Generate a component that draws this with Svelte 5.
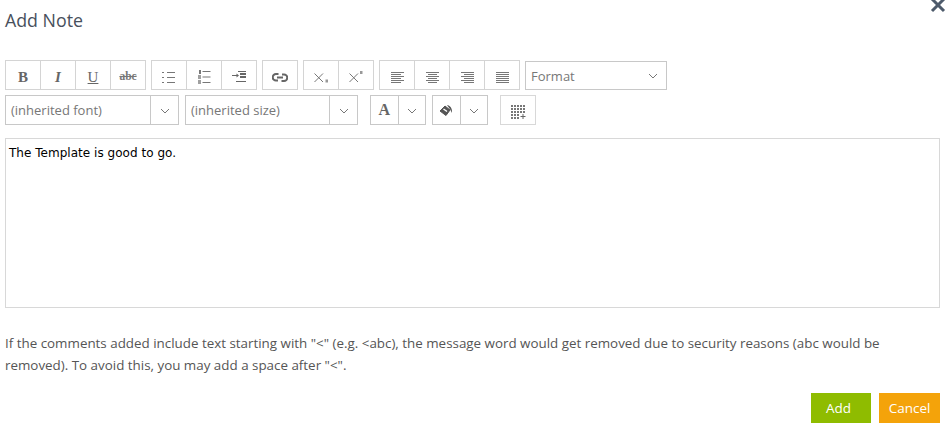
<script>
  const groups1 = [
    ['bold','italic','underline','strike'],
    ['ul','ol','indent'],
    ['link'],
    ['sub','sup'],
    ['left','center','right','justify']
  ];
  const aligns = {
    left: [[0,13],[0,10],[0,13],[0,10],[0,13],[0,10]],
    center: [[0,13],[2,9],[0,13],[2,9],[0,13],[2,9]],
    right: [[0,13],[3,10],[0,13],[3,10],[0,13],[3,10]],
    justify: [[0,13],[0,13],[0,13],[0,13],[0,13],[0,13]]
  };
  const gridDots = [];
  for (let y = 0; y < 5; y++) for (let x = 0; x < 5; x++) {
    if (!(y >= 3 && x > 2)) gridDots.push([x * 3, y * 3]);
  }
</script>

{#snippet chevron()}
  <svg class="chev" width="10" height="6" viewBox="0 0 10 6"><path d="M1 1 L5 5 L9 1" fill="none" stroke="#777" stroke-width="1"/></svg>
{/snippet}

{#snippet icon(name)}
  {#if name === 'bold'}
    <span class="glyph b">B</span>
  {:else if name === 'italic'}
    <span class="glyph i">I</span>
  {:else if name === 'underline'}
    <span class="glyph u">U</span>
  {:else if name === 'strike'}
    <span class="glyph s">abc</span>
  {:else if name === 'ul'}
    <svg width="14" height="11" viewBox="0 0 14 11"><g fill="#777"><rect x="0" y="0" width="2" height="1"/><rect x="0" y="5" width="2" height="1"/><rect x="0" y="10" width="2" height="1"/><rect x="5" y="0" width="8" height="1"/><rect x="5" y="5" width="8" height="1"/><rect x="5" y="10" width="8" height="1"/></g></svg>
  {:else if name === 'ol'}
    <svg width="13" height="14" viewBox="0 0 13 14"><g fill="#777"><rect x="1" y="0" width="2" height="4"/><rect x="0" y="5" width="3" height="4" opacity=".7"/><rect x="0" y="10" width="3" height="4" opacity=".7"/><rect x="4.500" y="1" width="8" height="1"/><rect x="4.500" y="6.500" width="8" height="1"/><rect x="4.500" y="12" width="8" height="1"/></g></svg>
  {:else if name === 'indent'}
    <svg width="14" height="12" viewBox="0 0 14 12"><g fill="#666"><rect x="6" y="0" width="8" height="1"/><rect x="8" y="2" width="6" height="2"/><rect x="8" y="5" width="6" height="2"/><rect x="4" y="10" width="10" height="1"/><path d="M0 4h4.500V2.500L7 4.500 4.500 6.500V5H0z"/></g></svg>
  {:else if name === 'link'}
    <svg width="16" height="9" viewBox="0 0 16 9"><g fill="none" stroke="#666" stroke-width="2"><path d="M6.500 1H4a3.300 3.300 0 0 0 0 6.600h2"/><path d="M9.500 8H12a3.300 3.300 0 0 0 0-6.600h-2"/><path d="M5 4.500h6"/></g></svg>
  {:else if name === 'sub'}
    <svg width="15" height="12" viewBox="0 0 15 12"><path d="M0.500 2.500 L9 11 M9 2.500 L0.500 11" stroke="#777" stroke-width="1" fill="none"/><rect x="11.500" y="8.500" width="2.500" height="3" fill="#999"/></svg>
  {:else if name === 'sup'}
    <svg width="15" height="12" viewBox="0 0 15 12"><path d="M0.500 2.500 L9 11 M9 2.500 L0.500 11" stroke="#777" stroke-width="1" fill="none"/><rect x="11" y="0" width="2.500" height="3" fill="#999"/></svg>
  {:else if aligns[name]}
    <svg width="13" height="11" viewBox="0 0 13 11">{#each aligns[name] as l, i}<rect x={l[0]} y={i * 2} width={l[1]} height="1" fill="#777"/>{/each}</svg>
  {/if}
{/snippet}

<div class="dialog">
  <header class="head">
    <h1>Add Note</h1>
    <svg class="close" width="16" height="15" viewBox="0 0 16 15"><path d="M2 0 L14 12 M14 0 L2 12" stroke="#4d5a6b" stroke-width="3" fill="none"/></svg>
  </header>

  <div class="toolbar">
    <div class="row one">
      {#each groups1 as g}
        <div class="group">
          {#each g as b}
            <button class="tb">{@render icon(b)}</button>
          {/each}
        </div>
      {/each}
      <div class="combo format"><span class="label">Format</span>{@render chevron()}</div>
    </div>
    <div class="row two">
      <div class="select font"><span class="label">(inherited font)</span><span class="arrow">{@render chevron()}</span></div>
      <div class="select size"><span class="label">(inherited size)</span><span class="arrow">{@render chevron()}</span></div>
      <div class="split color">
        <span class="main"><span class="glyph a">A</span></span><span class="arrow">{@render chevron()}</span>
      </div>
      <div class="split fill">
        <span class="main">
          <svg width="14" height="11" viewBox="0 0 14 11"><path d="M1 6 L6 1 L11 5 L7 10.500 Z" fill="#555" stroke="#555" stroke-linejoin="round"/><path d="M4.500 4 L8 6.500" stroke="#fff" stroke-width="1.500"/><path d="M8 0 C11 0.500 13.500 3 13 8 L11.500 5 Z" fill="#555"/></svg>
        </span><span class="arrow">{@render chevron()}</span>
      </div>
      <div class="table">
        <svg class="grid" width="15" height="14" viewBox="0 0 15 14">
          {#each gridDots as d}<rect x={d[0]} y={d[1]} width="2" height="2" fill="#777"/>{/each}
          <path d="M12 9v5M9.500 11.500h5" stroke="#666" stroke-width="1"/>
        </svg>
      </div>
    </div>
  </div>

  <div class="editor">The Template is good to go.</div>

  <p class="note">If the comments added include text starting with "&lt;" (e.g. &lt;abc), the message word would get removed due to security reasons (abc would be removed). To avoid this, you may add a space after "&lt;".</p>

  <footer class="actions">
    <button class="btn add">Add</button>
    <button class="btn cancel">Cancel</button>
  </footer>
</div>

<style>
  :global(body) { margin: 0; background: #fff; }
  .dialog {
    width: 951px; height: 430px; box-sizing: border-box; overflow: hidden;
    padding: 0 11px 0 5px;
    font-family: "Open Sans", "Noto Sans", sans-serif;
    color: #555;
  }
  .head { position: relative; height: 60px; }
  h1 {
    margin: 0; padding-top: 8px; font-weight: 400; font-size: 17.800px; line-height: 24px;
    color: #48505c;
  }
  .close { position: absolute; right: -6px; top: -1px; }
  .toolbar { display: flex; flex-direction: column; gap: 5px; }
  .row { display: flex; height: 30px; }
  .one { gap: 5px; }
  .group { display: flex; border: 1px solid #d4d4d4; box-sizing: border-box; height: 30px; }
  .tb {
    width: 35px; padding: 4px 0 0; border: 0; border-left: 1px solid #d4d4d4; background: #fff;
    display: flex; align-items: center; justify-content: center; box-sizing: border-box;
  }
  .tb:first-child { border-left: 0; width: 34px; }
  .glyph { font-family: "Liberation Serif", "DejaVu Serif", serif; color: #666; line-height: 1; }
  .b { font-weight: 700; font-size: 15px; }
  .i { font-style: italic; font-weight: 700; font-size: 15px; }
  .u { font-size: 15px; text-decoration: underline; }
  .s { font-size: 11.500px; font-weight: 700; color: #777; text-decoration: line-through; }
  .a { font-weight: 700; font-size: 16px; }
  .format {
    width: 142px; height: 29px; margin-top: 1px; box-sizing: border-box;
    border: 1px solid #c8c8c8; display: flex; align-items: center; justify-content: space-between;
    padding: 0 8px 0 5px;
  }
  .label { font-size: 13px; color: #777; white-space: nowrap; }
  .select, .split, .table {
    display: flex; box-sizing: border-box; height: 30px; border: 1px solid #c8c8c8; align-items: stretch;
  }
  .select .label { flex: 1; padding-left: 5px; line-height: 29px; }
  .arrow {
    width: 27px; border-left: 1px solid #c8c8c8; display: flex; align-items: center; justify-content: center;
  }
  .chev { margin-top: 1px; }
  .font { width: 174px; }
  .size { width: 173px; margin-left: 6px; }
  .color { width: 56px; margin-left: 12px; }
  .fill { width: 56px; margin-left: 6px; }
  .table { width: 36px; margin-left: 12px; border-color: #d8d8d8; align-items: center; justify-content: center; }
  .grid { margin-top: 4px; }
  .main { width: 27px; display: flex; align-items: center; justify-content: center; }
  .editor {
    margin-top: 13px; height: 170px; box-sizing: border-box; border: 1px solid #d8d8d8;
    padding: 6px 3px; font: 12px/16px "DejaVu Sans", Verdana, sans-serif; letter-spacing: .03px; color: #000;
  }
  .note { margin: 24px 0 0; font-size: 13.380px; line-height: 22px; color: #555; height: 44px; }
  .actions { display: flex; justify-content: flex-end; gap: 8px; margin-top: 17px; }
  .btn {
    height: 30px; border: 0; padding: 0; color: #fff; font: inherit; font-size: 13.500px;
  }
  .add { width: 60px; padding-right: 5px; background: #8fbc00; }
  .cancel { width: 61px; background: #f4a30a; }
</style>
